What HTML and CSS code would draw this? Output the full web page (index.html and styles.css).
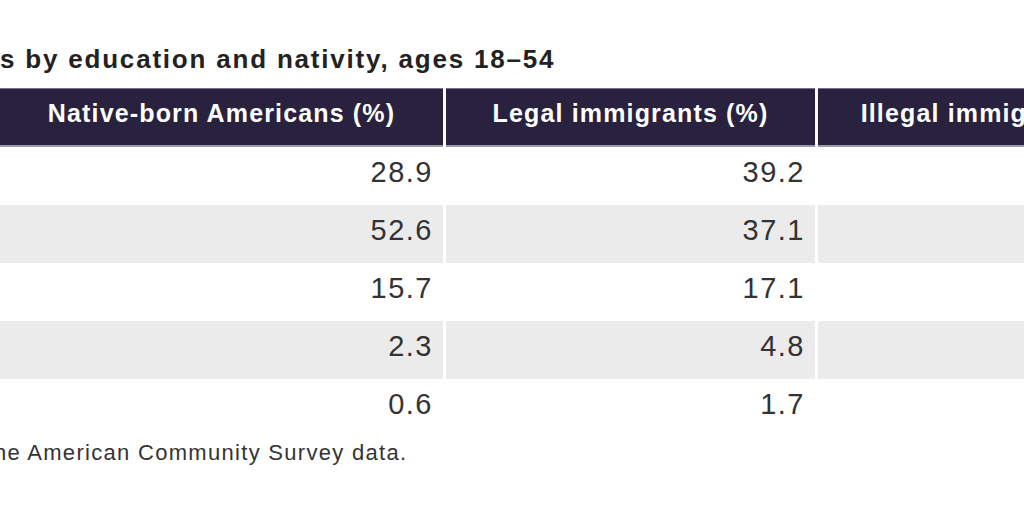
FILE: index.html
```html
<!DOCTYPE html>
<html lang="en">
<head>
<meta charset="utf-8">
<title>Education by nativity</title>
<link rel="stylesheet" href="styles.css">
</head>
<body>
<div class="page">
  <h2 class="title">s by education and nativity, ages 18–54</h2>
  <table class="data">
    <colgroup>
      <col class="c-native">
      <col class="c-legal">
      <col class="c-illegal">
    </colgroup>
    <thead>
      <tr>
        <th>Native-born Americans (%)</th>
        <th>Legal immigrants (%)</th>
        <th>Illegal immigrants (%)</th>
      </tr>
    </thead>
    <tbody>
      <tr><td>28.9</td><td>39.2</td><td></td></tr>
      <tr class="alt"><td>52.6</td><td>37.1</td><td></td></tr>
      <tr><td>15.7</td><td>17.1</td><td></td></tr>
      <tr class="alt"><td>2.3</td><td>4.8</td><td></td></tr>
      <tr><td>0.6</td><td>1.7</td><td></td></tr>
    </tbody>
  </table>
  <p class="note">he American Community Survey data.</p>
</div>
</body>
</html>
```

FILE: styles.css
```css
html, body {
  margin: 0;
  padding: 0;
  background: #ffffff;
  overflow: hidden;
}

.page {
  width: 1024px;
  height: 512px;
  overflow: hidden;
  font-family: "Liberation Sans", Arial, sans-serif;
  color: #333333;
}

.title {
  margin: 44px 0 14px 0;
  font-size: 26px;
  line-height: 30px;
  font-weight: bold;
  letter-spacing: 1.8px;
  color: #222222;
  white-space: nowrap;
}

.data {
  border-collapse: separate;
  border-spacing: 3px 0;
  margin-left: -3px;
  table-layout: fixed;
  width: 1193px;
}

.c-native { width: 443px; }
.c-legal { width: 369px; }
.c-illegal { width: 369px; }

.data th {
  box-sizing: border-box;
  background: #28223f;
  color: #ffffff;
  font-size: 25px;
  line-height: 30px;
  font-weight: bold;
  letter-spacing: 1.15px;
  height: 59px;
  padding: 0 8px 8px 8px;
  text-align: center;
  white-space: nowrap;
  border-top: 1px solid #75718a;
  border-bottom: 2px solid #9c99ac;
}

.data td {
  box-sizing: border-box;
  height: 58px;
  padding: 0 10px 8px 0;
  text-align: right;
  font-size: 29px;
  line-height: 34px;
  letter-spacing: 1.5px;
  color: #333333;
}

.data tr.alt td {
  background: #ebebeb;
}

.note {
  margin: 2px 0 0 -6px;
  font-size: 22px;
  line-height: 28px;
  letter-spacing: 1.3px;
  color: #333333;
  white-space: nowrap;
}
```
